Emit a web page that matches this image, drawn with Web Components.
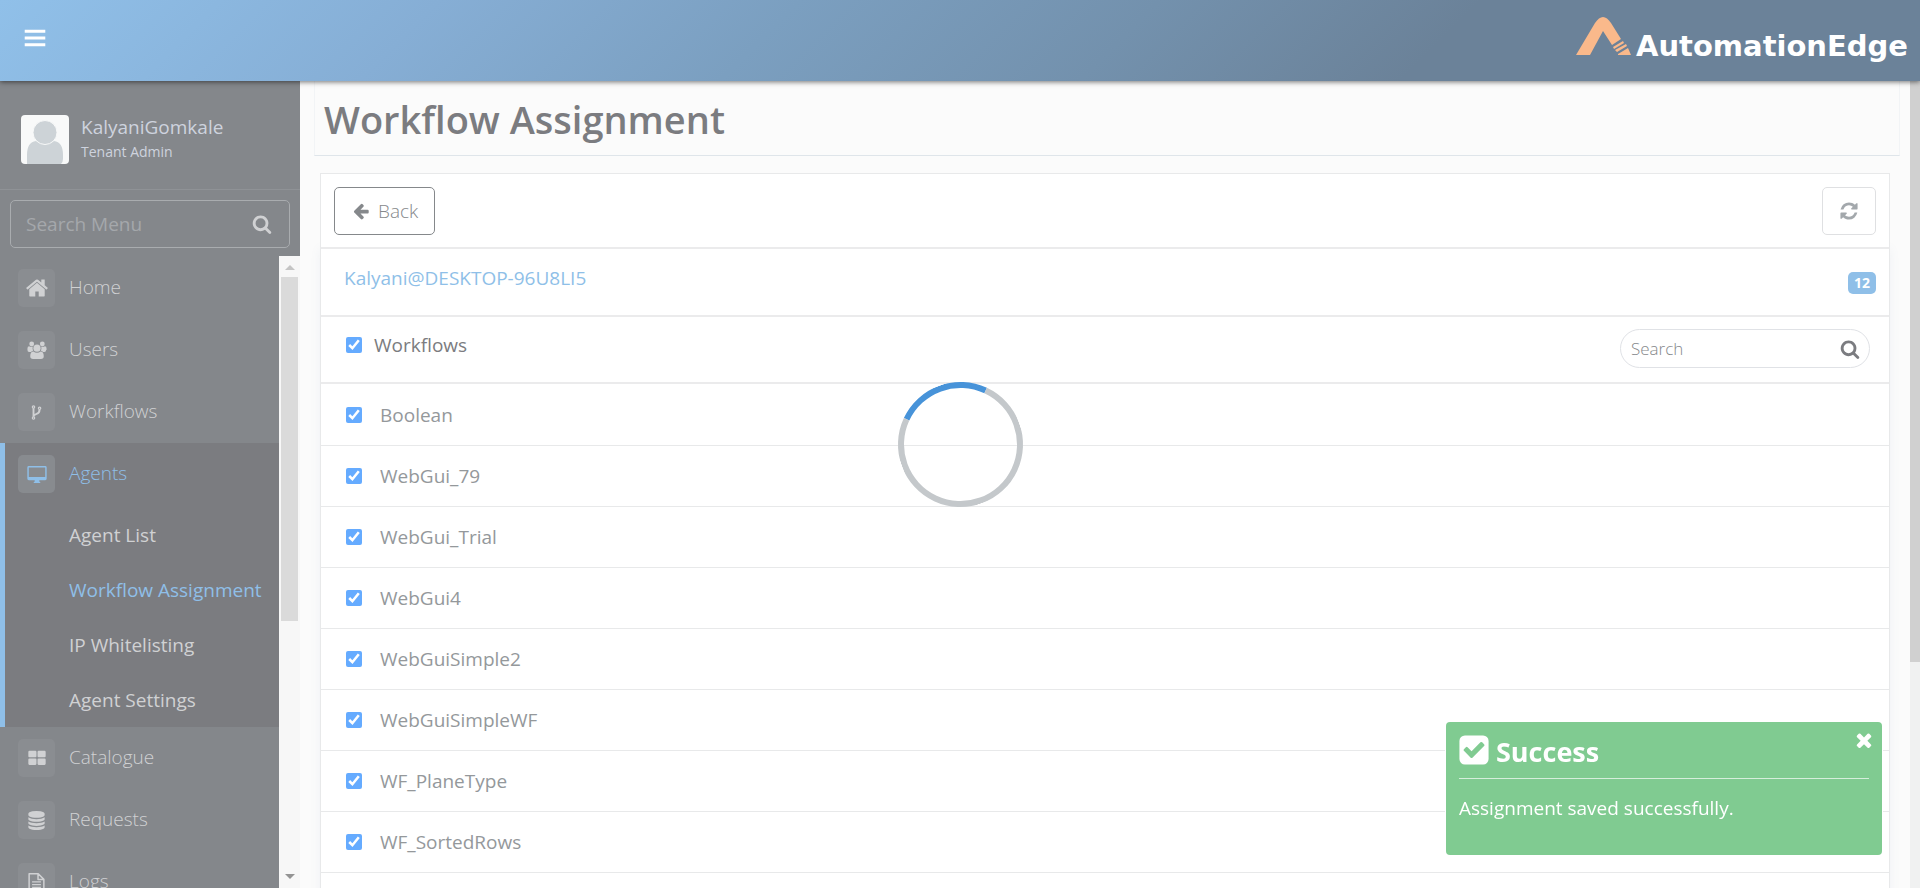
<!DOCTYPE html>
<html lang="en">
<head>
<meta charset="utf-8">
<title>Workflow Assignment</title>
<meta name="viewport" content="width=device-width, initial-scale=1">
<style>
  html, body { margin: 0; height: 100%; }
  body { font-family: "Open Sans", "Noto Sans", sans-serif; background: #fbfbfb; color: #7b7c80; overflow: hidden; }
</style>
</head>
<body>
<ae-app>
  <ae-header slot="header"></ae-header>
  <ae-sidebar slot="sidebar">
    <ae-profile slot="profile" role-name="Tenant Admin">KalyaniGomkale</ae-profile>
    <ae-nav-item icon="home">Home</ae-nav-item>
    <ae-nav-item icon="users">Users</ae-nav-item>
    <ae-nav-item icon="fork">Workflows</ae-nav-item>
    <ae-nav-item icon="desktop" active>Agents
      <ae-sub-item slot="sub">Agent List</ae-sub-item>
      <ae-sub-item slot="sub" current>Workflow Assignment</ae-sub-item>
      <ae-sub-item slot="sub">IP Whitelisting</ae-sub-item>
      <ae-sub-item slot="sub">Agent Settings</ae-sub-item>
    </ae-nav-item>
    <ae-nav-item icon="grid">Catalogue</ae-nav-item>
    <ae-nav-item icon="database">Requests</ae-nav-item>
    <ae-nav-item icon="file">Logs</ae-nav-item>
  </ae-sidebar>
  <ae-page-title>Workflow Assignment</ae-page-title>
  <ae-panel agent="Kalyani@DESKTOP-96U8LI5" count="12">
    <ae-check-row>Boolean</ae-check-row>
    <ae-check-row>WebGui_79</ae-check-row>
    <ae-check-row>WebGui_Trial</ae-check-row>
    <ae-check-row>WebGui4</ae-check-row>
    <ae-check-row>WebGuiSimple2</ae-check-row>
    <ae-check-row>WebGuiSimpleWF</ae-check-row>
    <ae-check-row>WF_PlaneType</ae-check-row>
    <ae-check-row>WF_SortedRows</ae-check-row>
  </ae-panel>
  <ae-spinner slot="overlay"></ae-spinner>
  <ae-toast slot="overlay" heading="Success">Assignment saved successfully.</ae-toast>
</ae-app>
<script>
const ICONS = {
  bars: '<path d="M128 288h1536v224H128zM128 784h1536v224H128zM128 1280h1536v224H128z"/>',
  search: '<path d="M1216 832q0-185-131.5-316.5t-316.5-131.5-316.5 131.5-131.5 316.5 131.5 316.5 316.5 131.5 316.5-131.5 131.5-316.5zm512 832q0 52-38 90t-90 38q-54 0-90-38l-343-342q-179 124-399 124-143 0-273.5-55.5t-225-150-150-225-55.5-273.5 55.5-273.5 150-225 225-150 273.5-55.5 273.5 55.5 225 150 150 225 55.5 273.5q0 220-124 399l343 343q37 37 37 90z"/>',
  home: '<path d="M1472 992v480q0 26-19 45t-45 19h-384v-384h-256v384h-384q-26 0-45-19t-19-45v-480q0-1 .5-3t.5-3l575-474 575 474q1 2 1 6zm223-69l-62 74q-8 9-21 11h-3q-13 0-21-7l-692-577-692 577q-12 8-24 7-13-2-21-11l-62-74q-8-10-7-23.5t11-21.5l719-599q32-26 76-26t76 26l244 204v-195q0-14 9-23t23-9h192q14 0 23 9t9 23v408l219 182q10 8 11 21.5t-7 23.5z"/>',
  users: '<circle cx="420" cy="350" r="215"/><circle cx="1372" cy="350" r="215"/><path d="M40 900V760q0-210 150-210 60 60 230 60 70 0 110-20-30 90-30 160 0 120 60 210-120 10-200 110H190Q40 1070 40 900zM1752 900V760q0-210-150-210-60 60-230 60-70 0-110-20 30 90 30 160 0 120-60 210 120 10 200 110h130q150 0 150-170z"/><circle cx="896" cy="730" r="320"/><path d="M290 1450q0-420 280-420 140 110 326 110t326-110q280 0 280 420 0 250-250 250H540q-250 0-250-250z"/>',
  fork: '<g fill="none" stroke="currentColor" stroke-width="130"><circle cx="580" cy="320" r="125"/><circle cx="580" cy="1470" r="125"/><circle cx="1220" cy="450" r="125"/></g><path fill="none" stroke="currentColor" stroke-width="200" d="M580 440v900M1220 570c0 400-180 420-370 490-180 60-270 110-270 290"/>',
  desktop: '<path fill-rule="evenodd" d="M160 180h1472q130 0 130 130v1010q0 130-130 130h-530v120q0 30 90 70v60H600v-60q90-40 90-70v-120H160q-130 0-130-130V310q0-130 130-130zm0 130v850h1472V310z"/>',
  grid: '<path d="M220 256h528q100 0 100 100v380q0 100-100 100H220q-100 0-100-100V356q0-100 100-100zM1044 256h528q100 0 100 100v380q0 100-100 100h-528q-100 0-100-100V356q0-100 100-100zM220 932h528q100 0 100 100v380q0 100-100 100H220q-100 0-100-100v-380q0-100 100-100zM1044 932h528q100 0 100 100v380q0 100-100 100h-528q-100 0-100-100v-380q0-100 100-100z"/>',
  database: '<path d="M896 768q237 0 443-43t325-127v170q0 69-103 128t-280 93.5-385 34.5-385-34.5-280-93.5-103-128v-170q119 84 325 127t443 43zm0 768q237 0 443-43t325-127v170q0 69-103 128t-280 93.5-385 34.5-385-34.5-280-93.5-103-128v-170q119 84 325 127t443 43zm0-384q237 0 443-43t325-127v170q0 69-103 128t-280 93.5-385 34.5-385-34.5-280-93.5-103-128v-170q119 84 325 127t443 43zm0-1152q208 0 385 34.5t280 93.5 103 128v128q0 69-103 128t-280 93.5-385 34.5-385-34.5-280-93.5-103-128v-128q0-69 103-128t280-93.5 385-34.5z"/>',
  file: '<path fill="none" stroke="currentColor" stroke-width="140" stroke-linejoin="round" d="M200 70h860l530 530v1120H200zM1040 80v530h540"/><path d="M480 770h830v130H480zM480 1030h830v130H480zM480 1290h830v130H480z"/>',
  left: '<path d="M1664 896v128q0 53-32.5 90.5t-84.5 37.5h-704l293 294q38 36 38 90t-38 90l-75 76q-37 37-90 37-52 0-91-37l-651-652q-37-37-37-90 0-52 37-91l651-650q38-38 91-38 52 0 90 38l75 74q38 38 38 91t-38 91l-293 293h704q52 0 84.5 37.5t32.5 90.5z"/>',
  refresh: '<path d="M1639 1056q0 5-1 7-64 268-268 434.5t-478 166.5q-146 0-282.5-55t-243.5-157l-129 129q-19 19-45 19t-45-19-19-45v-448q0-26 19-45t45-19h448q26 0 45 19t19 45-19 45l-137 137q71 66 161 102t187 36q134 0 250-65t186-179q11-17 53-117 8-23 30-23h192q13 0 22.5 9.5t9.5 22.5zm25-800v448q0 26-19 45t-45 19h-448q-26 0-45-19t-19-45 19-45l138-138q-148-137-349-137-134 0-250 65t-186 179q-11 17-53 117-8 23-30 23h-199q-13 0-22.5-9.5t-9.5-22.5v-7q65-268 270-434.5t480-166.5q146 0 284 55.5t245 156.5l130-129q19-19 45-19t45 19 19 45z"/>',
  check: '<path d="M813 1299l614-614q19-19 19-45t-19-45l-102-102q-19-19-45-19t-45 19l-467 467-211-211q-19-19-45-19t-45 19l-102 102q-19 19-19 45t19 45l358 358q19 19 45 19t45-19zm851-883v960q0 119-84.5 203.5t-203.5 84.5h-960q-119 0-203.5-84.5t-84.5-203.5v-960q0-119 84.5-203.5t203.5-84.5h960q119 0 203.5 84.5t84.5 203.5z"/>',
  times: '<path d="M1490 1322q0 40-28 68l-136 136q-28 28-68 28t-68-28l-294-294-294 294q-28 28-68 28t-68-28l-136-136q-28-28-28-68t28-68l294-294-294-294q-28-28-28-68t28-68l136-136q28-28 68-28t68 28l294 294 294-294q28-28 68-28t68 28l136 136q28 28 28 68t-28 68l-294 294 294 294q28 28 28 68z"/>'
};

/* Registers an element whose shadow root is filled by view(host). */
function define(name, view) {
  customElements.define(name, class extends HTMLElement {
    constructor() { super(); this.attachShadow({ mode: 'open' }); }
    connectedCallback() { this.shadowRoot.innerHTML = '<style>:host,*{box-sizing:border-box}</style>' + view(this); }
  });
}

define('ae-icon', el => `
<style>:host{display:block;flex:none;width:20px;height:20px}svg{display:block;width:100%;height:100%}</style>
<svg viewBox="0 0 1792 1792" fill="currentColor" aria-hidden="true">${ICONS[el.getAttribute('name')]}</svg>`);

define('ae-app', () => `
<style>
:host{display:grid;grid-template:auto minmax(0,1fr)/300px minmax(0,1fr) 10px;height:100vh}
.top{grid-column:1/-1;z-index:2}
main{overflow:hidden;padding:0 20px 0 14px}
.track{background:#f0f1f1}
.thumb{height:72%;background:#d0d0d0}
</style>
<div class="top"><slot name="header"></slot></div>
<slot name="sidebar"></slot>
<main><slot></slot></main>
<div class="track"><div class="thumb"></div></div>
<slot name="overlay"></slot>`);

define('ae-header', () => `
<style>
:host{display:block}
header{display:flex;align-items:center;justify-content:space-between;height:81px;padding:0 12px 0 23px;
  background:linear-gradient(135deg,#90c0e9 0%,#86aed5 22%,#7b9fc0 40%,#7391ad 58%,#6b8299 74%);box-shadow:0 1px 5px rgba(0,0,0,.55)}
button{border:0;background:none;padding:0;color:#fff;margin-bottom:6px}
button ae-icon{width:24px;height:24px}
.logo{display:flex;align-items:flex-end;gap:4px;color:#fff;text-decoration:none;font:bold 29px/32px "DejaVu Sans",sans-serif}
.logo svg{width:56px;height:40px;margin-bottom:10px}
.logo span{margin-bottom:4px}
</style>
<header>
<button aria-label="Toggle menu"><ae-icon name="bars"></ae-icon></button>
<a class="logo" href="#"><svg viewBox="0 0 56 40" aria-hidden="true"><g fill="#fab98b"><path d="M0 39L19 7q8-12 16 0l10 16-9 6-9-14-13 24z"/><path d="M37 31l10-6 1 2-10 6zM39 34l11-6 1 2-10 6zM42 38l10-6 3 7H42z"/></g></svg><span>AutomationEdge</span></a>
</header>`);

define('ae-sidebar', () => `
<style>
:host{display:flex;flex-direction:column;min-height:0;background:#84878b;color:#d0d1d3}
.search{display:flex;align-items:center;margin:10px 10px 8px;height:48px;padding:0 17px 0 15px;border:1px solid #a9acaf;border-radius:5px}
input{flex:1;min-width:0;border:0;outline:0;background:none;font:19px/24px "Open Sans",sans-serif;color:#d0d1d3;padding:0}
input::placeholder{color:#a5a8ab;opacity:1}
.body{flex:1;min-height:0;display:flex}
nav{flex:1;min-width:0;overflow:hidden;padding-top:1px}
.bar{width:21px;display:flex;flex-direction:column;align-items:center;background:#f7f7f7;padding:9px 0;justify-content:space-between}
.up,.down{border:5px solid transparent;border-top-width:0;border-bottom:5px solid #c4c4c4}
.down{border-bottom-width:0;border-top:5px solid #939393}
.thumb{width:17px;height:344px;margin:7px 0 auto;background:#dadada}
</style>
<slot name="profile"></slot>
<div class="search"><input type="text" placeholder="Search Menu" aria-label="Search Menu"><ae-icon name="search"></ae-icon></div>
<div class="body"><nav><slot></slot></nav>
<div class="bar"><div class="up"></div><div class="thumb"></div><div class="down"></div></div></div>`);

define('ae-profile', el => `
<style>
:host{display:flex;gap:12px;padding:34px 21px 25px;border-bottom:1px solid #8f9296;color:#ced3de}
svg{width:48px;height:49px;flex:none}
.name{font-size:19px;line-height:24px}
.role{font-size:14px;line-height:25px}
</style>
<svg viewBox="0 0 48 49" role="img" aria-label="Avatar"><rect width="48" height="49" rx="4" fill="#f8f9f9"/><g fill="#cdd3d7"><path d="M6 49V40q0-13 9-14 9 6 18 0 9 1 9 14v4q0 3-2 5H9z"/><circle cx="24" cy="17.500" r="12" stroke="#f8f9f9"/></g></svg>
<div><div class="name"><slot></slot></div><div class="role">${el.getAttribute('role-name')}</div></div>`);

define('ae-nav-item', el => `
<style>
:host{display:block;color:#d0d1d3}
:host([active]){background:#7b7c80;border-left:5px solid #8fbfe8}
a{display:flex;align-items:center;gap:14px;height:62px;padding-left:18px;color:inherit;text-decoration:none;font-size:19px;line-height:26px;font-weight:300}
.box{width:37px;height:38px;border-radius:5px;background:#8a8d91;display:grid;place-items:center}
.label{padding-bottom:2px}
:host([active]) a{padding-left:13px;color:#8fbfe8}
:host([active]) .box{background:#888b8f}
:host([icon=home]) ae-icon{width:24px;height:24px}
:host([icon=fork]) ae-icon{width:17px;height:17px}
:host([icon=database]) ae-icon,:host([icon=file]) ae-icon{width:19px;height:19px}
.sub{padding-top:2px}
</style>
<a href="#"><span class="box"><ae-icon name="${el.getAttribute('icon')}"></ae-icon></span><span class="label"><slot></slot></span></a>
${el.hasAttribute('active') ? '<div class="sub"><slot name="sub"></slot></div>' : ''}`);

define('ae-sub-item', el => `
<style>
:host{display:block}
a{display:flex;align-items:center;height:55px;padding-left:64px;color:#d0d1d3;text-decoration:none;font-size:19px;line-height:26px;white-space:nowrap}
:host([current]) a{color:#8fbfe8}
</style><a href="#"><slot></slot></a>`);

define('ae-page-title', () => `
<style>
:host{display:block;margin-right:-10px;border:1px solid #f2f4f6;border-top:0;border-bottom:1px solid #dfe5ea}
h1{margin:0;padding:11px 9px 9px;font-size:38px;line-height:54px;font-weight:600;color:#7b7c80}
</style><h1><slot></slot></h1>`);

define('ae-panel', el => `
<style>
:host{display:block;margin:17px 0 0 6px;background:#fff;border:1px solid #e8e9ea;color:#7b7c80;box-shadow:0 76px 10px rgba(100,130,160,.08)}
.row{display:flex;justify-content:space-between;border-bottom:2px solid #ebebec}
.tools{padding:13px 13px 12px}
button{display:flex;align-items:center;gap:8px;height:48px;padding:0 16px 0 17px;border:1px solid #85888b;border-radius:5px;background:#fff;color:#85888b;font:300 19px/26px "Open Sans",sans-serif}
button ae-icon{width:18px;height:18px}
.refresh{padding:0 16px;border-color:#dfe0e2;color:#a3a8ac}
.refresh ae-icon{width:20px;height:20px}
.agent{height:68px;padding:16px 13px 0 23px;font-size:19px;line-height:26px}
.agent a{color:#8fbfe8;text-decoration:none}
.badge{align-self:flex-start;margin-top:7px;padding:0 6px;border-radius:5px;background:#8fbfe8;color:#fff;font-size:14px;line-height:22px;font-weight:700}
.all{height:67px;padding:12px 19px 0 25px}
label{display:flex;gap:12px;align-items:center;height:26px;margin-top:3px;font-size:19px;line-height:26px}
input[type=checkbox]{width:16px;height:16px;margin:0;accent-color:#0075ff;opacity:.6}
.search{display:flex;align-items:center;width:250px;height:39px;padding:0 9px 0 10px;border:1px solid #e0e2e6;border-radius:20px}
.search input{flex:1;min-width:0;border:0;outline:0;padding:0;background:none;font:300 17px/24px "Open Sans",sans-serif}
.search input::placeholder{color:#85888b;opacity:1}
.list{padding:1px 0 60px}
</style>
<div class="row tools"><button><ae-icon name="left"></ae-icon>Back</button><button class="refresh" aria-label="Refresh"><ae-icon name="refresh"></ae-icon></button></div>
<div class="row agent"><a href="#">${el.getAttribute('agent')}</a><span class="badge">${el.getAttribute('count')}</span></div>
<div class="row all"><label><input type="checkbox" checked>Workflows</label><div class="search"><input type="text" placeholder="Search" aria-label="Search"><ae-icon name="search"></ae-icon></div></div>
<div class="list"><slot></slot></div>`);

define('ae-check-row', () => `
<style>
:host{display:block;height:61px;border-bottom:1px solid #e8e9ea;padding:17px 25px 0}
label{display:flex;gap:18px;align-items:center;height:26px;font-size:19px;line-height:26px;color:#94989b}
input{width:16px;height:16px;margin:0;accent-color:#0075ff;opacity:.6}
</style><label><input type="checkbox" checked><slot></slot></label>`);

define('ae-spinner', () => `
<style>:host{position:fixed;inset:0;display:grid;place-items:center;pointer-events:none;z-index:3}
div{width:125px;height:125px;border:6px solid #c4c8cb;border-top-color:#4793d9;border-radius:50%;transform:rotate(-20deg)}</style>
<div role="status" aria-label="Loading"></div>`);

define('ae-toast', el => `
<style>
:host{position:fixed;right:38px;bottom:33px;width:436px;height:133px;padding:13px;border-radius:4px;background:#80cb91;color:#fff;z-index:4;box-shadow:0 0 0 1px #fff}
.head{display:flex;align-items:flex-start;gap:6px;height:44px;border-bottom:1px solid #d5eedb}
.head ae-icon{width:34px;height:34px;margin:-2px}
h2{margin:0 auto 0 1px;font-size:27px;line-height:34px;font-weight:700}
button{border:0;padding:0;background:none;color:#fff;margin:-6px -6px 0 0}
.head button ae-icon{width:22px;height:22px;margin:0}
p{margin:16px 0 0;font-size:19px;line-height:26px;font-weight:500}
</style>
<div class="head"><ae-icon name="check"></ae-icon><h2>${el.getAttribute('heading')}</h2><button aria-label="Close"><ae-icon name="times"></ae-icon></button></div>
<p><slot></slot></p>`);
</script>
</body>
</html>
